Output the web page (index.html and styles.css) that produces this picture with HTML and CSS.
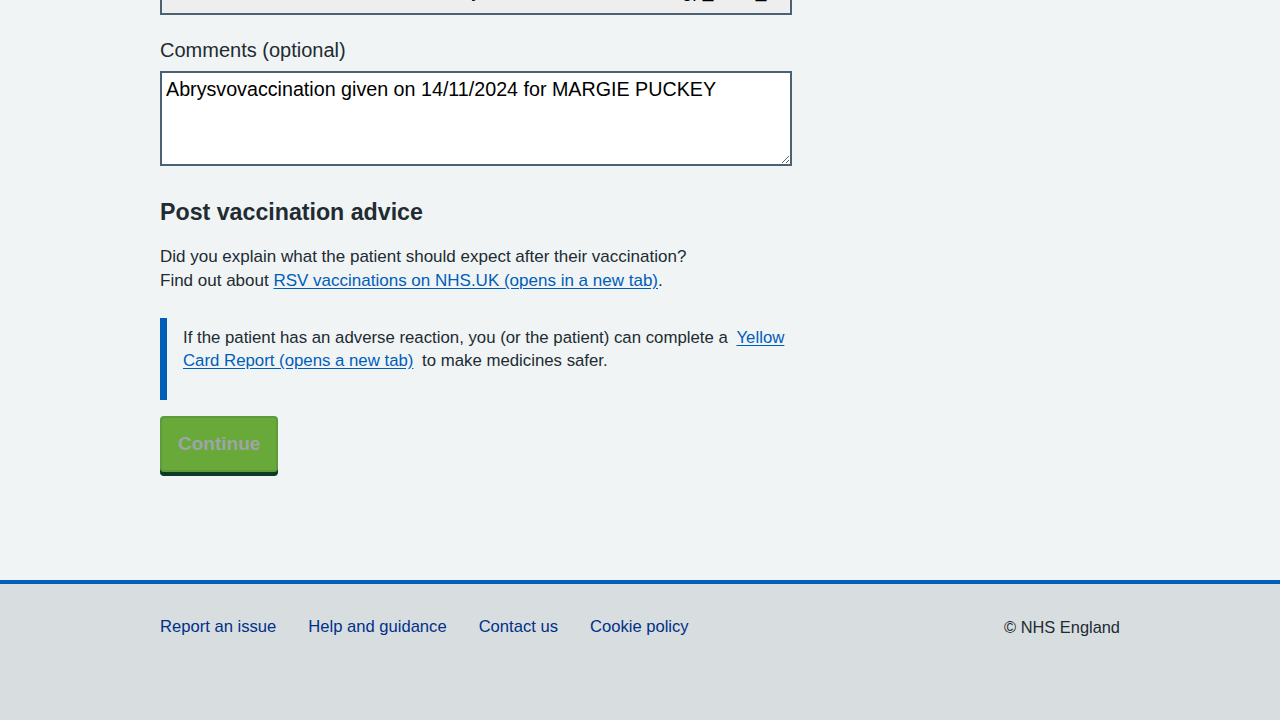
FILE: index.html
```html
<!DOCTYPE html>
<html lang="en">
<head>
<meta charset="utf-8">
<title>Post vaccination advice</title>
<link rel="stylesheet" href="styles.css">
</head>
<body>
<div class="page">
  <main class="container">
    <div class="column">
      <div class="field top-field">
        <div class="input-readonly">Abrysvo batch number: RSVgp_0001_</div>
      </div>
      <div class="field">
        <label class="label" for="comments">Comments (optional)</label>
        <textarea id="comments" class="textarea">Abrysvovaccination given on 14/11/2024 for MARGIE PUCKEY</textarea>
      </div>
      <h2 class="heading">Post vaccination advice</h2>
      <p class="body">Did you explain what the patient should expect after their vaccination?<br>Find out about <a href="#" class="link">RSV vaccinations on NHS.UK (opens in a new tab)</a>.</p>
      <div class="inset">
        <p class="inset-text">If the patient has an adverse reaction, you (or the patient) can complete a <span class="gap"></span><a href="#" class="link">Yellow Card Report (opens a new tab)</a><span class="gap"></span> to make medicines safer.</p>
      </div>
      <button class="button" type="button">Continue</button>
    </div>
  </main>
  <footer class="footer">
    <div class="footer-inner">
      <ul class="footer-links">
        <li><a href="#" class="footer-link">Report an issue</a></li>
        <li><a href="#" class="footer-link">Help and guidance</a></li>
        <li><a href="#" class="footer-link">Contact us</a></li>
        <li><a href="#" class="footer-link">Cookie policy</a></li>
      </ul>
      <p class="copyright">© NHS England</p>
    </div>
  </footer>
</div>
</body>
</html>
```

FILE: styles.css
```css
* { box-sizing: border-box; }
html, body { margin: 0; padding: 0; }
body {
  background: #f0f4f5;
  color: #212b32;
  font-family: "Liberation Sans", Arial, sans-serif;
  font-size: 16px;
  line-height: 24px;
}
.page {
  min-height: 720px;
  display: flex;
  flex-direction: column;
}
.container {
  width: 960px;
  margin: 0 auto;
  flex: 1;
}
.column {
  width: 632px;
  margin-top: -30px;
  display: flex;
  flex-direction: column;
  align-items: flex-start;
}
.field { width: 100%; }
.top-field { margin-bottom: 21px; }
.input-readonly {
  width: 100%;
  height: 45px;
  border: 2px solid #4c6272;
  background: #eeeeee;
  color: #000;
  font-size: 19px;
  line-height: 24px;
  padding: 7px 0 0 280px;
  overflow: hidden;
}
.label {
  display: block;
  font-size: 20px;
  line-height: 28px;
  margin-bottom: 7px;
  color: #212b32;
}
.textarea {
  display: block;
  width: 632px;
  height: 95px;
  border: 2px solid #4c6272;
  background: #fff;
  color: #000;
  font-family: "Liberation Sans", Arial, sans-serif;
  font-size: 19.7px;
  line-height: 24px;
  padding: 4px 4px;
  margin: 0;
  resize: vertical;
}
.heading {
  font-size: 23.2px;
  line-height: 32px;
  font-weight: bold;
  margin: 30px 0 0;
  color: #212b32;
}
.body {
  margin: 17px 0 0;
  font-size: 17px;
  line-height: 24px;
}
.link { color: #005eb8; text-decoration: underline; text-underline-offset: 2px; }
.gap { display: inline-block; width: 4px; }
.inset {
  width: 100%;
  margin-top: 25px;
  border-left: 7px solid #005eb8;
  padding: 8px 0 28px 16px;
}
.inset-text {
  margin: 0;
  font-size: 16.8px;
  line-height: 23px;
}
.button {
  margin-top: 16px;
  height: 56px;
  padding: 0 16px;
  background: #68a93a;
  border: 2px solid #5e9a3a;
  border-radius: 4px;
  box-shadow: 0 4px 0 #0b3b25;
  color: #9fa4a7;
  font-family: "Liberation Sans", Arial, sans-serif;
  font-size: 19px;
  font-weight: bold;
  line-height: 24px;
  cursor: pointer;
}
.footer {
  background: #d8dde0;
  border-top: 4px solid #005eb8;
  height: 140px;
  margin-top: 104px;
}
.footer-inner {
  width: 960px;
  margin: 0 auto;
  padding-top: 31px;
  display: flex;
  justify-content: space-between;
  align-items: flex-start;
}
.footer-links {
  list-style: none;
  margin: 0;
  padding: 0;
  display: flex;
  gap: 32px;
}
.footer-link {
  color: #003087;
  text-decoration: none;
  font-size: 16.6px;
  line-height: 24px;
}
.copyright {
  margin: 0;
  font-size: 16.4px;
  line-height: 24px;
  color: #212b32;
}
```
